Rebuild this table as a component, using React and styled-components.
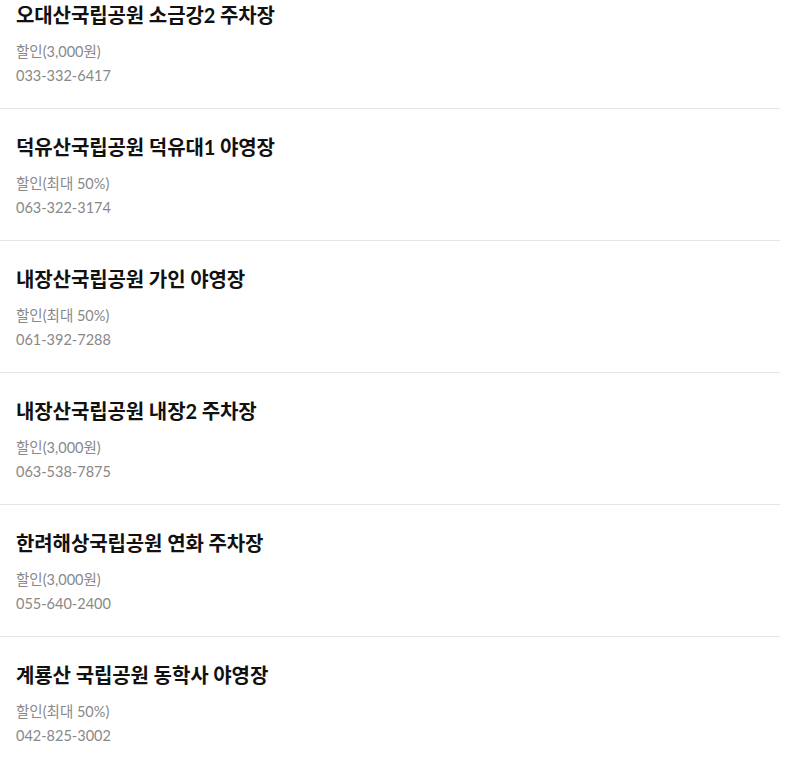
import styled, { createGlobalStyle } from "styled-components";

const GlobalStyle = createGlobalStyle`
  body {
    margin: 0;
    background: #fff;
    font-family: Lato, "Noto Sans CJK KR", sans-serif;
    overflow: hidden;
  }
`;

const parks = [
  { name: "오대산국립공원 소금강2 주차장", discount: "할인(3,000원)", phone: "033-332-6417" },
  { name: "덕유산국립공원 덕유대1 야영장", discount: "할인(최대 50%)", phone: "063-322-3174" },
  { name: "내장산국립공원 가인 야영장", discount: "할인(최대 50%)", phone: "061-392-7288" },
  { name: "내장산국립공원 내장2 주차장", discount: "할인(3,000원)", phone: "063-538-7875" },
  { name: "한려해상국립공원 연화 주차장", discount: "할인(3,000원)", phone: "055-640-2400" },
  { name: "계룡산 국립공원 동학사 야영장", discount: "할인(최대 50%)", phone: "042-825-3002" },
];

const App = () => {
  return (
    <>
      <GlobalStyle />
      <List>
        {parks.map((park) => (
          <Item key={park.name}>
            <Title>{park.name}</Title>
            <Info>{park.discount}</Info>
            <Info>{park.phone}</Info>
          </Item>
        ))}
      </List>
    </>
  );
};

// page is shown scrolled a little, first title sits near the top edge
const List = styled.ul`
  list-style: none;
  margin: -23px 0 0 0;
  padding: 0;
  width: 780px;
`;

const Item = styled.li`
  padding: 26px 16px 20px;
  border-bottom: 1px solid #e5e5e5;
`;

const Title = styled.h3`
  margin: 0 0 13px;
  font-size: 20px;
  line-height: 24px;
  font-weight: 700;
  color: #111;
  letter-spacing: -0.1px;
`;

const Info = styled.p`
  margin: 0;
  font-size: 14.5px;
  line-height: 24px;
  color: #888;
`;

export default App;
